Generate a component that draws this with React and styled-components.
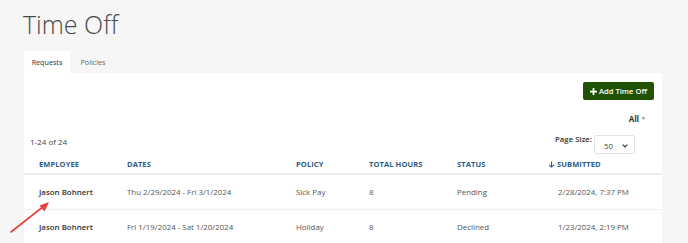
import React from "react"
import styled, { createGlobalStyle } from "styled-components"

const GlobalStyle = createGlobalStyle`
  html, body {
    margin: 0;
    padding: 0;
    background: #f6f6f6;
    font-family: "Open Sans", "Liberation Sans", sans-serif;
    color: #444;
  }
`

const Page = styled.div`
  width: 688px;
  height: 243px;
  overflow: hidden;
  padding: 0 26px 0 24px;
  box-sizing: border-box;
  position: relative;
`

const Title = styled.h1`
  margin: 0;
  padding-top: 9px;
  margin-left: -1px;
  height: 42px;
  font-size: 25px;
  font-weight: 300;
  color: #4a4a4a;
  line-height: 30px;
`

const Tabs = styled.div`
  display: flex;
  height: 22px;
`

const Tab = styled.div`
  width: ${p => p.w}px;
  display: flex;
  align-items: center;
  justify-content: center;
  font-size: 7.2px;
  color: ${p => (p.active ? "#333" : "#666")};
  background: ${p => (p.active ? "#fff" : "transparent")};
`

const Panel = styled.div`
  background: #fff;
  padding: 9px 8px 0 6px;
  height: 200px;
`

const TopBar = styled.div`
  display: flex;
  justify-content: flex-end;
`

const AddButton = styled.button`
  display: flex;
  align-items: center;
  gap: 2px;
  height: 18px;
  width: 71px;
  padding: 0 0 0 7px;
  border: none;
  border-radius: 2px;
  background: #1f5203;
  color: #fff;
  font-family: inherit;
  font-size: 7.6px;
  font-weight: 600;
`

const FilterRow = styled.div`
  display: flex;
  justify-content: flex-end;
  align-items: center;
  height: 18px;
  margin-top: 9px;
  padding-right: 8px;
  font-size: 8px;
  font-weight: 700;
  color: #333;
  gap: 2px;
`

const Caret = styled.span`
  font-size: 5px;
  color: #888;
`

const MetaRow = styled.div`
  display: flex;
  justify-content: space-between;
  align-items: flex-start;
  margin-top: 8px;
  height: 19px;
`

const Count = styled.span`
  margin-top: 1px;
  font-size: 8px;
  color: #444;
`

const PageSize = styled.div`
  display: flex;
  align-items: flex-start;
  gap: 2px;
  padding-right: 19px;
  font-size: 7.8px;
  font-weight: 600;
  color: #333;
`

const PageSizeLabel = styled.span`
  margin-top: -1px;
`

const Select = styled.div`
  width: 41px;
  height: 19px;
  box-sizing: border-box;
  border: 1px solid #e4e4e4;
  border-radius: 2px;
  display: flex;
  align-items: center;
  justify-content: space-between;
  padding: 2px 6px 0 9px;
  font-weight: 400;
  color: #444;
`

const Table = styled.table`
  border-collapse: collapse;
  margin-left: -6px;
  width: 638px;
  table-layout: fixed;
`

const Th = styled.th`
  text-align: left;
  height: 19px;
  padding: 0 0 0 ${p => p.pl || 0}px;
  font-size: 7.5px;
  font-weight: 700;
  letter-spacing: 0.1px;
  color: #2b5c8a;
  border-bottom: 2px solid #ececec;
  white-space: nowrap;
`

const Td = styled.td`
  height: 34px;
  padding: 0 0 0 ${p => p.pl || 0}px;
  font-size: 7.9px;
  font-weight: ${p => (p.bold ? 600 : 400)};
  color: ${p => (p.bold ? "#333" : "#555")};
  border-bottom: 1px solid #eee;
  white-space: nowrap;
`

const SortIcon = styled.svg`
  width: 7px;
  height: 7px;
  margin-right: 2px;
  vertical-align: -1px;
`

const Arrow = styled.svg`
  position: absolute;
  left: 0;
  top: 195px;
  width: 60px;
  height: 45px;
`

const cols = [
  { key: "employee", label: "EMPLOYEE", w: 103, pl: 15 },
  { key: "dates", label: "DATES", w: 169 },
  { key: "policy", label: "POLICY", w: 73 },
  { key: "hours", label: "TOTAL HOURS", w: 88 },
  { key: "status", label: "STATUS", w: 91 },
  { key: "submitted", label: "SUBMITTED", w: 114 },
]

const rows = [
  {
    employee: "Jason Bohnert",
    dates: "Thu 2/29/2024 - Fri 3/1/2024",
    policy: "Sick Pay",
    hours: "8",
    status: "Pending",
    submitted: "2/28/2024, 7:37 PM",
  },
  {
    employee: "Jason Bohnert",
    dates: "Fri 1/19/2024 - Sat 1/20/2024",
    policy: "Holiday",
    hours: "8",
    status: "Declined",
    submitted: "1/23/2024, 2:19 PM",
  },
]

export default function App() {
  return (
    <>
      <GlobalStyle />
      <Page>
        <Title>Time Off</Title>
        <Tabs>
          <Tab active w={46}>Requests</Tab>
          <Tab w={46}>Policies</Tab>
        </Tabs>
        <Panel>
          <TopBar>
            <AddButton>
              <svg width="7" height="7" viewBox="0 0 8 8">
                <path d="M3 0h2v3h3v2H5v3H3V5H0V3h3z" fill="#fff" />
              </svg>
              Add Time Off
            </AddButton>
          </TopBar>
          <FilterRow>
            All <Caret>▼</Caret>
          </FilterRow>
          <MetaRow>
            <Count>1-24 of 24</Count>
            <PageSize>
              <PageSizeLabel>Page Size:</PageSizeLabel>
              <Select>
                50
                <svg width="6" height="4" viewBox="0 0 6 4">
                  <path d="M0.7 0.7L3 3L5.3 0.7" stroke="#333" strokeWidth="1.2" fill="none" />
                </svg>
              </Select>
            </PageSize>
          </MetaRow>
          <Table>
            <colgroup>
              {cols.map(c => (
                <col key={c.key} style={{ width: c.w }} />
              ))}
            </colgroup>
            <thead>
              <tr>
                {cols.map(c => (
                  <Th key={c.key} pl={c.pl}>
                    {c.key === "submitted" && (
                      <SortIcon viewBox="0 0 8 8">
                        <path d="M4 0.5V7M1.2 4.3L4 7L6.8 4.3" stroke="#2b5c8a" strokeWidth="1.2" fill="none" />
                      </SortIcon>
                    )}
                    {c.label}
                  </Th>
                ))}
              </tr>
            </thead>
            <tbody>
              {rows.map((r, i) => (
                <tr key={i}>
                  {cols.map(c => (
                    <Td key={c.key} pl={c.key === "employee" ? 15 : c.key === "submitted" ? 10 : 0} bold={c.key === "employee"}>
                      {r[c.key]}
                    </Td>
                  ))}
                </tr>
              ))}
            </tbody>
          </Table>
        </Panel>
        <Arrow viewBox="0 0 60 45">
          <path d="M11 37L44 11" stroke="#e8403a" strokeWidth="1.6" strokeLinecap="round" />
          <path d="M49 7L39.5 10.5L44.5 16.5Z" fill="#e8403a" />
        </Arrow>
      </Page>
    </>
  )
}
